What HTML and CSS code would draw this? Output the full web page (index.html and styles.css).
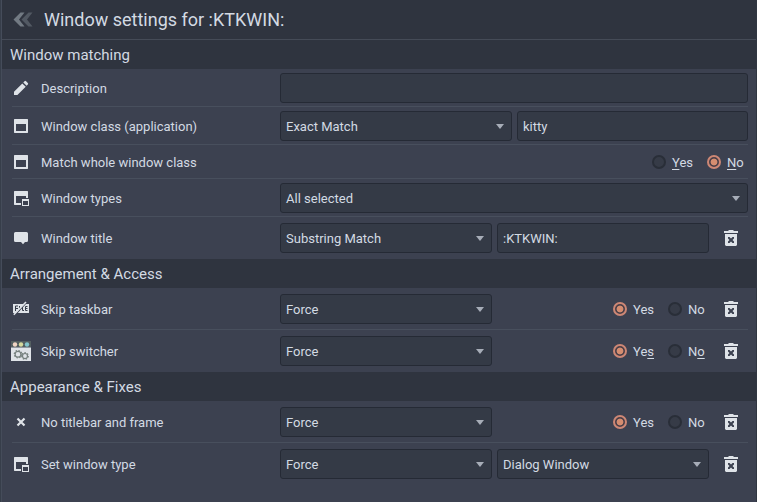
FILE: index.html
```
<!DOCTYPE html>
<html lang="en">
<head>
<meta charset="utf-8">
<title>Window settings</title>
<link rel="stylesheet" href="styles.css">
</head>
<body>
<svg class="defs" width="0" height="0">
  <symbol id="window" viewBox="0 0 20 20"><path fill-rule="evenodd" d="M3.500 3h13l.5.5v13l-.5.5h-13l-.5-.5v-13zM5 8v7h10V8z"/></symbol>
  <symbol id="types" viewBox="0 0 20 20"><path d="M3.500 3h13l.5.5V10h-2V8H5v7h5v2H3.500l-.5-.5v-13z"/><path fill-rule="evenodd" d="M11 11h7v7h-7zM12 13v4h5v-4z"/></symbol>
  <symbol id="trash" viewBox="0 0 20 20"><path d="M3 3h4l1-1h4l1 1h4v2H3z"/><path fill-rule="evenodd" d="M4 6h12v11l-1 1H5l-1-1zm3 3v1.500L8.500 12 7 13.500V15h1.500l1.500-1.500 1.500 1.500H13v-1.500L11.500 12 13 10.500V9h-1.500L10 10.500 8.500 9z"/></symbol>
</svg>
<main class="panel">
  <header class="title">
    <svg class="back" viewBox="0 0 20 20"><path class="near" d="M7.500 2.500h4L6 9.500l5.500 7h-4L.5 9.500z"/><path class="far" d="M15.500 2.500h4L14 9.500l5.500 7h-4L8.500 9.500z"/></svg>
    <h1>Window settings for :KTKWIN:</h1>
  </header>

  <h2>Window matching</h2>
  <div class="row">
    <svg class="icon" viewBox="0 0 20 20"><path d="M3 13.700 11.300 5.400l3.400 3.400L6.400 17H3zM12.300 4.400l1.200-1.200q.8-.7 1.600 0l1.700 1.700q.8.800 0 1.600l-1.200 1.200z"/></svg>
    <span class="label">Description</span>
    <div class="controls"><div class="field"></div></div>
  </div>
  <div class="row">
    <svg class="icon"><use href="#window"/></svg>
    <span class="label">Window class (application)</span>
    <div class="controls"><div class="field select half">Exact Match</div><div class="field">kitty</div></div>
  </div>
  <div class="row short">
    <svg class="icon"><use href="#window"/></svg>
    <span class="label">Match whole window class</span>
    <div class="controls end"><span class="radio"></span><span class="option"><u>Y</u>es</span><span class="radio on"></span><span class="option last"><u>N</u>o</span></div>
  </div>
  <div class="row">
    <svg class="icon"><use href="#types"/></svg>
    <span class="label">Window types</span>
    <div class="controls"><div class="field select">All selected</div></div>
  </div>
  <div class="row tall final">
    <svg class="icon" viewBox="0 0 20 20"><path d="M4.500 4h11Q17 4 17 5.500v7q0 1.500-1.500 1.500H14l-2 2.200-2-2.200H4.500Q3 14 3 12.500v-7Q3 4 4.500 4z"/></svg>
    <span class="label">Window title</span>
    <div class="controls"><div class="field select rule">Substring Match</div><div class="field">:KTKWIN:</div></div>
    <svg class="trash"><use href="#trash"/></svg>
  </div>

  <h2>Arrangement &amp; Access</h2>
  <div class="row tall">
    <svg class="icon" viewBox="0 0 20 20"><path d="M2 5h16v9H2z"/><path class="ink" d="M4.500 12V7H7M4.500 9.500H7M8.500 7v5M11.500 7v4.500H13M16.500 7.500h-2v4h2M15 9.500h1.500"/><path class="gap" d="M3.500 16.500 15 4"/><path class="slash" d="M2.800 15.800 15 3"/></svg>
    <span class="label">Skip taskbar</span>
    <div class="controls"><div class="field select rule">Force</div><div class="choice"><span class="radio on"></span><span class="option">Yes</span><span class="radio"></span><span class="option last">No</span></div></div>
    <svg class="trash"><use href="#trash"/></svg>
  </div>
  <div class="row tall final">
    <svg class="icon" viewBox="0 0 20 20"><path class="app-bar" d="M0 0h20v6.500H0z"/><path d="M0 6.500h20V20H0z"/><circle cx="4" cy="3.500" r="2.200" fill="#f1d5c4"/><circle cx="10" cy="3.500" r="2.200" fill="#d5d99d"/><circle cx="16" cy="3.500" r="2.200" fill="#83c4cb"/><g class="gears"><circle class="teeth" cx="7" cy="13.200" r="3.700"/><circle cx="7" cy="13.200" r="2.900"/><circle class="teeth" cx="14" cy="15" r="3.300"/><circle cx="14" cy="15" r="2.500"/></g></svg>
    <span class="label">Skip switcher</span>
    <div class="controls"><div class="field select rule">Force</div><div class="choice"><span class="radio on"></span><span class="option">Ye<u>s</u></span><span class="radio"></span><span class="option last">N<u>o</u></span></div></div>
    <svg class="trash"><use href="#trash"/></svg>
  </div>

  <h2>Appearance &amp; Fixes</h2>
  <div class="row tall">
    <svg class="icon" viewBox="0 0 20 20"><path class="cross" d="m6.500 6.500 7 7m0-7-7 7"/></svg>
    <span class="label">No titlebar and frame</span>
    <div class="controls"><div class="field select rule">Force</div><div class="choice"><span class="radio on"></span><span class="option">Yes</span><span class="radio"></span><span class="option last">No</span></div></div>
    <svg class="trash"><use href="#trash"/></svg>
  </div>
  <div class="row tall final">
    <svg class="icon"><use href="#types"/></svg>
    <span class="label">Set window type</span>
    <div class="controls"><div class="field select rule">Force</div><div class="field select">Dialog Window</div></div>
    <svg class="trash"><use href="#trash"/></svg>
  </div>
</main>
</body>
</html>
```
FILE: styles.css
```
* { box-sizing: border-box; }
body { margin: 0; background: #3c4150; color: #d3dae3; font: 13px/16px Roboto, sans-serif; overflow: hidden; }
.defs { display: block; height: 0; }
.panel { height: 502px; border-left: 1px solid #373e4a; border-right: 1px solid #303641; box-shadow: inset 1px 0 #454c5a; padding-left: 1px; }
.title { height: 40px; display: flex; align-items: center; padding-left: 11px; background: #2f343f; border-bottom: 1px solid #454b57; }
h1, h2 { margin: 0; font-weight: 400; }
h1 { font-size: 18px; line-height: 22px; }
.back { width: 20px; height: 20px; margin-right: 11px; }
.near { fill: #727a83; }
.far { fill: #525963; }
h2 { height: 29px; padding: 1px 0 0 8px; background: #2f343f; font-size: 15px; line-height: 29px; }
.row { height: 38px; margin: 0 8px 0 10px; padding: 4px 0 3px; display: flex; align-items: center; border-bottom: 1px solid #484f5d; }
.row.short { height: 34px; padding: 2px 0 1px; }
.row.tall { height: 42px; padding: 6px 0 5px; }
.row.final { border-bottom-color: transparent; }
.icon { width: 20px; height: 20px; margin: 0 10px 0 -1px; fill: #dfe3e8; flex: none; }
.label { width: 239px; padding-top: 2px; flex: none; }
.controls { flex: 1; min-width: 0; display: flex; align-items: center; gap: 5px; }
.field { flex: 1; height: 30px; padding: 1px 5px 0; border: 1px solid #252a35; border-radius: 3px; background: #343a46; line-height: 27px; }
.field.half { flex: 0 0 232px; }
.field.rule { flex: 0 0 212px; }
.select { display: flex; justify-content: space-between; align-items: center; padding-right: 7px; line-height: 29px; }
.select::after { content: ""; border: 4px solid transparent; border-top: 5px solid #a7adb8; border-bottom: 0; }
.choice, .end { flex: 1; display: flex; align-items: center; justify-content: flex-end; gap: 0; }
.radio { width: 14px; height: 14px; border: 2px solid #292e38; border-radius: 50%; background: #363b47; }
.radio.on { border: 2px solid #cd8775; background: radial-gradient(circle, #d58d70 0 2.900px, #4b3f48 3.800px) border-box; }
.option { width: 34px; padding-top: 2px; margin-left: 6px; margin-right: 1px; }
.option.last { width: 18px; margin-right: 3px; }
u { text-underline-offset: 2px; }
.trash { width: 20px; height: 20px; margin: 0 7px 0 12px; fill: #dfe3e8; flex: none; }
.ink { fill: none; stroke: #343b48; stroke-width: 1; }
.gap { stroke: #3c4150; stroke-width: 1.200; }
.slash { stroke: #dfe3e8; stroke-width: 1.600; }
.app-bar { fill: #535e60; }
.gears { fill: none; stroke: #76817f; stroke-width: 1.200; }
.teeth { stroke-dasharray: 1.500 1.400; }
.cross { stroke: #dfe3e8; stroke-width: 2.200; }
```
